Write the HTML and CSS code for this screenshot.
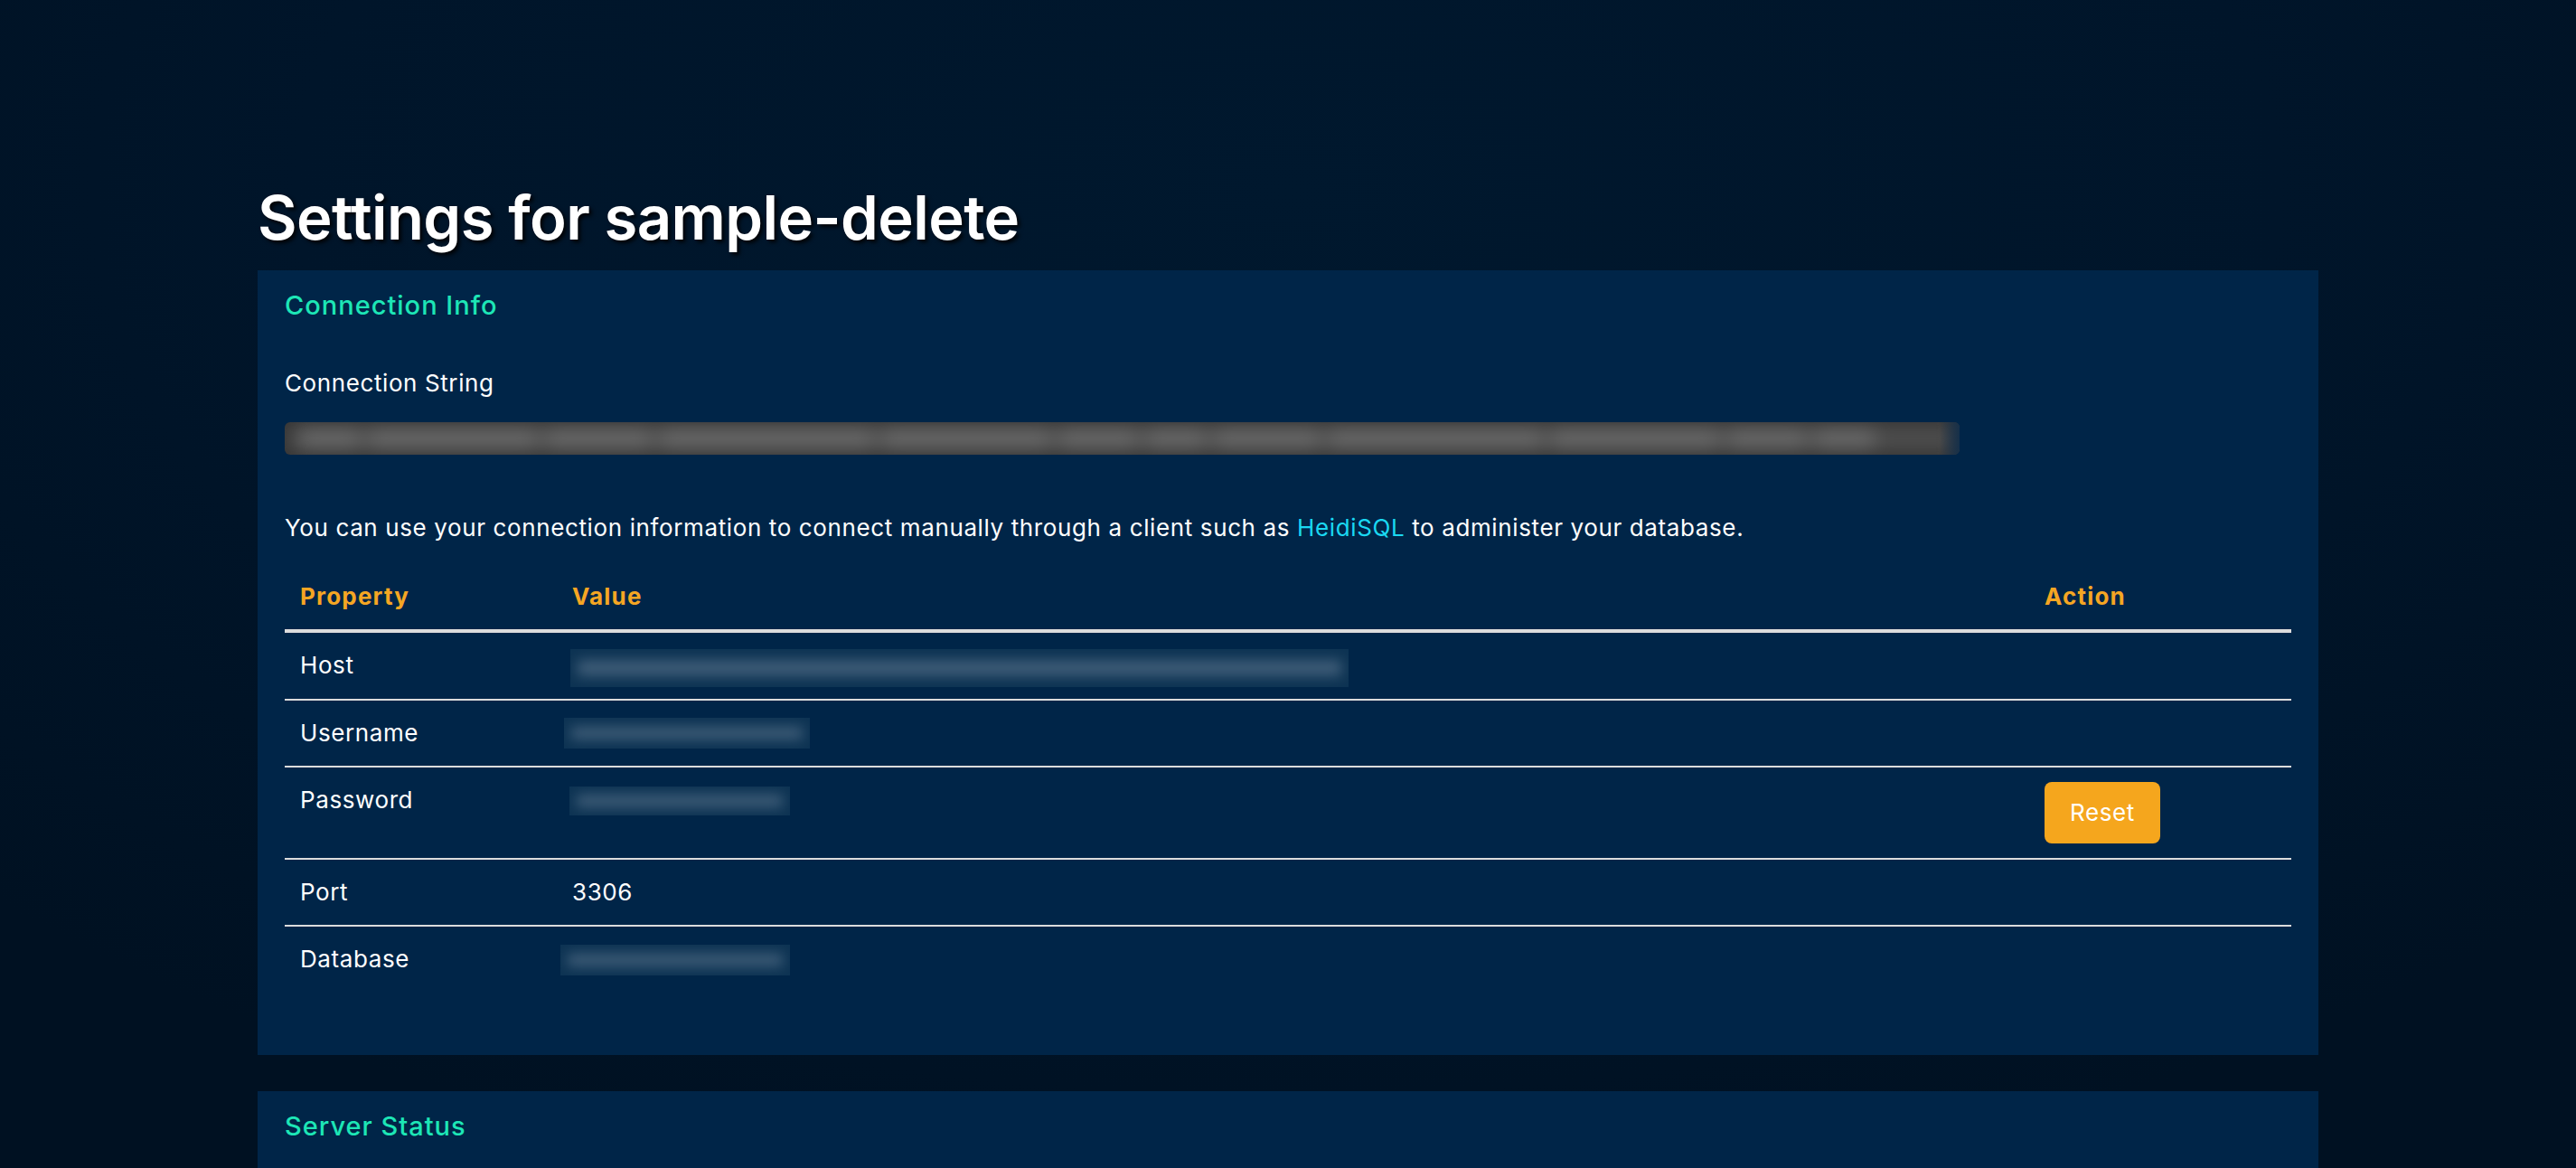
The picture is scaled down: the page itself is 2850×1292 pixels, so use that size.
FILE: index.html
```html
<!DOCTYPE html>
<html lang="en">
<head>
<meta charset="utf-8">
<title>Settings for sample-delete</title>
<link rel="stylesheet" href="styles.css">
</head>
<body>
<main class="page">
  <h1 class="title">Settings for sample-delete</h1>

  <section class="card">
    <h3 class="card-title">Connection Info</h3>
    <div class="label">Connection String</div>
    <div class="conn-box">
      <div class="conn-blur">
        <span class="blob w1"></span><span class="blob w2"></span><span class="blob w3"></span><span class="blob w4"></span><span class="blob w2"></span><span class="blob w5"></span><span class="blob w1"></span><span class="blob w3"></span><span class="blob w4"></span><span class="blob w2"></span><span class="blob w5"></span><span class="blob w1"></span>
      </div>
    </div>
    <p class="note">You can use your connection information to connect manually through a client such as <a class="link" href="#">HeidiSQL</a> to administer your database.</p>

    <table class="props">
      <colgroup>
        <col class="col-prop">
        <col class="col-val">
        <col class="col-act">
      </colgroup>
      <thead>
        <tr><th>Property</th><th>Value</th><th>Action</th></tr>
      </thead>
      <tbody>
        <tr>
          <td>Host</td>
          <td><span class="secret secret-host"><span class="secret-ink"></span></span></td>
          <td></td>
        </tr>
        <tr>
          <td>Username</td>
          <td><span class="secret secret-user"><span class="secret-ink"></span></span></td>
          <td></td>
        </tr>
        <tr>
          <td>Password</td>
          <td><span class="secret secret-pass"><span class="secret-ink"></span></span></td>
          <td><button class="btn-reset" type="button">Reset</button></td>
        </tr>
        <tr>
          <td>Port</td>
          <td>3306</td>
          <td></td>
        </tr>
        <tr>
          <td>Database</td>
          <td><span class="secret secret-db"><span class="secret-ink"></span></span></td>
          <td></td>
        </tr>
      </tbody>
    </table>
  </section>

  <section class="card card-next">
    <h3 class="card-title">Server Status</h3>
  </section>
</main>
</body>
</html>
```

FILE: styles.css
```css
* { box-sizing: border-box; }

html, body {
  margin: 0;
  padding: 0;
}

body {
  background: radial-gradient(ellipse 70% 80% at 50% 15%, #00182e 0%, #00152a 55%, #001122 100%);
  min-height: 1292px;
  font-family: "Inter", "Liberation Sans", sans-serif;
  color: #ffffff;
  overflow: hidden;
}

.page {
  width: 2280px;
  margin-left: 285px;
  padding-top: 201px;
}

.title {
  margin: 0 0 18px 0;
  font-size: 67px;
  line-height: 80px;
  font-weight: 600;
  letter-spacing: -0.6px;
  color: #ffffff;
  text-shadow: 3px 3px 4px rgba(0, 0, 0, 0.85);
}

.card {
  background: #002548;
  padding: 21px 30px 20px 30px;
}

.card-next {
  margin-top: 40px;
  min-height: 200px;
}

.card-title {
  margin: 0;
  font-size: 29px;
  line-height: 35px;
  font-weight: 500;
  letter-spacing: 1px;
  color: #1de6b6;
}

.label {
  margin-top: 49px;
  font-size: 26px;
  line-height: 39px;
  letter-spacing: 0.6px;
  color: #ffffff;
}

.conn-box {
  margin-top: 24px;
  width: 1853px;
  height: 36px;
  border-radius: 6px;
  background: #353535;
  padding: 4px 4px 4px 5px;
  overflow: hidden;
  position: relative;
}

.conn-box::after {
  content: "";
  position: absolute;
  right: 0;
  top: 0;
  bottom: 0;
  width: 22px;
  background: linear-gradient(to right, rgba(0, 37, 72, 0), #16304a);
}

.conn-blur {
  display: flex;
  gap: 6px;
  height: 28px;
  background: #4d4d4d;
  padding: 3px 10px;
  filter: blur(10px);
}

.blob {
  display: block;
  height: 22px;
  background: #6a6a6a;
  border-radius: 10px;
}
.w1 { width: 70px; }
.w2 { width: 190px; }
.w3 { width: 120px; }
.w4 { width: 240px; }
.w5 { width: 90px; }

.note {
  margin: 61px 0 0 0;
  font-size: 26px;
  line-height: 39px;
  letter-spacing: 0.62px;
  color: #ffffff;
}

.link {
  color: #1ad8f2;
  text-decoration: none;
}

.props {
  margin-top: 21px;
  margin-bottom: 50px;
  width: 100%;
  border-collapse: collapse;
  table-layout: fixed;
  font-size: 26px;
  line-height: 40px;
}

.col-prop { width: 301px; }
.col-val { width: 1629px; }
.col-act { width: 290px; }

.props th {
  text-align: left;
  font-weight: 700;
  letter-spacing: 1.2px;
  color: #f5a623;
  padding: 16px 17px;
  border-bottom: 4px solid #dcdcdc;
}

.props td {
  padding: 16px 17px;
  vertical-align: top;
  letter-spacing: 0.6px;
  color: #ffffff;
  border-bottom: 2px solid #dcdcdc;
}

.props tbody tr:first-child td {
  padding-bottom: 13px;
}

.props tbody tr:last-child td {
  border-bottom: none;
}

.secret {
  display: inline-block;
  vertical-align: top;
  background: #0d3353;
  overflow: hidden;
  position: relative;
}

.secret-ink {
  display: block;
  position: absolute;
  left: 8px;
  right: 8px;
  top: 28%;
  bottom: 28%;
  background: #3e5c77;
  filter: blur(7px);
}

.secret-host {
  width: 861px;
  height: 42px;
  margin: 2px 0 0 -2px;
}
.secret-user {
  width: 272px;
  height: 34px;
  margin: 3px 0 0 -9px;
}
.secret-pass {
  width: 244px;
  height: 32px;
  margin: 5px 0 0 -3px;
}
.secret-db {
  width: 254px;
  height: 34px;
  margin: 4px 0 0 -13px;
}

.btn-reset {
  display: block;
  border: none;
  border-radius: 8px;
  background: #f5a61d;
  color: #ffffff;
  font-family: "Inter", "Liberation Sans", sans-serif;
  font-size: 26px;
  letter-spacing: 0.6px;
  line-height: 42px;
  padding: 13px 28px;
  cursor: pointer;
}
```
